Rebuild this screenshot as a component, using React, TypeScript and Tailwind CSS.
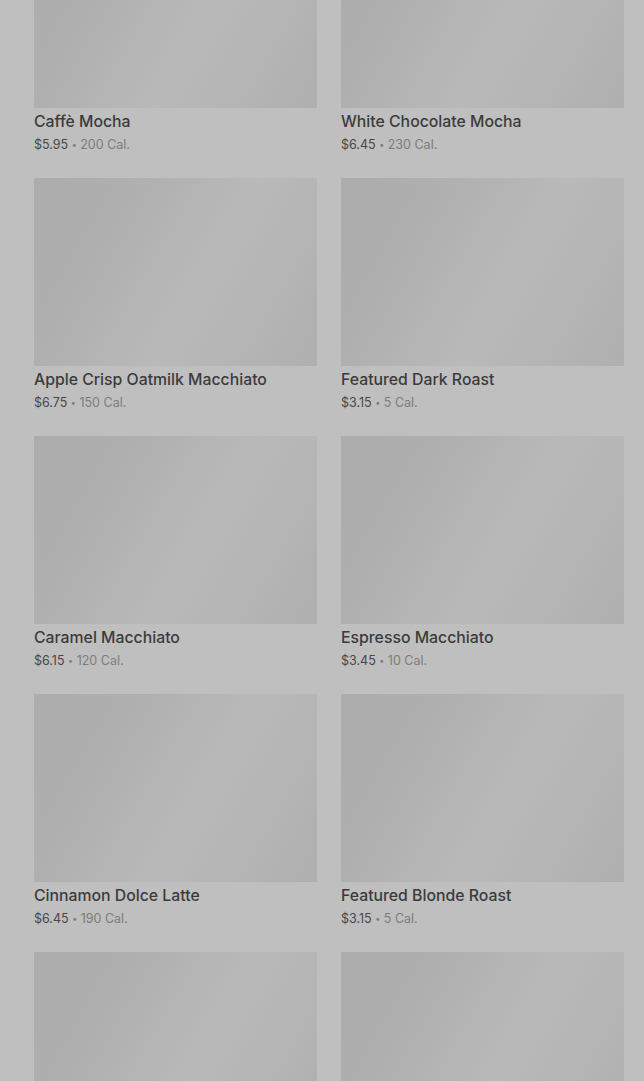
type Drink = {
  name: string;
  price: string;
  cal: string;
};

const DRINKS: Drink[] = [
  { name: "Caffè Mocha", price: "$5.95", cal: "200 Cal." },
  { name: "White Chocolate Mocha", price: "$6.45", cal: "230 Cal." },
  { name: "Apple Crisp Oatmilk Macchiato", price: "$6.75", cal: "150 Cal." },
  { name: "Featured Dark Roast", price: "$3.15", cal: "5 Cal." },
  { name: "Caramel Macchiato", price: "$6.15", cal: "120 Cal." },
  { name: "Espresso Macchiato", price: "$3.45", cal: "10 Cal." },
  { name: "Cinnamon Dolce Latte", price: "$6.45", cal: "190 Cal." },
  { name: "Featured Blonde Roast", price: "$3.15", cal: "5 Cal." },
];

function Placeholder() {
  // Skeleton image while the product photo loads
  return (
    <div className="h-[188px] w-full bg-[linear-gradient(120deg,#acacac_0%,#b0b0b0_30%,#b9b9b9_58%,#b4b4b4_80%,#afafaf_100%)]" />
  );
}

function DrinkCard({ drink }: { drink: Drink }) {
  return (
    <div className="flex flex-col">
      <Placeholder />
      <p className="mt-[3px] text-[15.8px] font-medium leading-[22px] text-[#3b3b3b]">
        {drink.name}
      </p>
      <p className="mt-[2px] text-[12.5px] leading-[20px]">
        <span className="text-[#474747]">{drink.price}</span>
        <span className="text-[#7c7c7c]">
          {" "}
          <span className="text-[9px] align-[1px]">•</span> {drink.cal}
        </span>
      </p>
    </div>
  );
}

export default function App() {
  return (
    <main
      className="h-[1081px] w-full overflow-hidden bg-[#bfbfbf]"
      style={{ fontFamily: "Inter, 'Noto Sans', sans-serif" }}
    >
      {/* page is scrolled: first row's image is cut off at the top */}
      <div className="-mt-[80px] grid grid-cols-2 gap-x-[24px] gap-y-[23px] pl-[34px] pr-[20px]">
        {DRINKS.map((d) => (
          <DrinkCard key={d.name} drink={d} />
        ))}
        {/* next row, still loading below the fold */}
        <Placeholder />
        <Placeholder />
      </div>
    </main>
  );
}
